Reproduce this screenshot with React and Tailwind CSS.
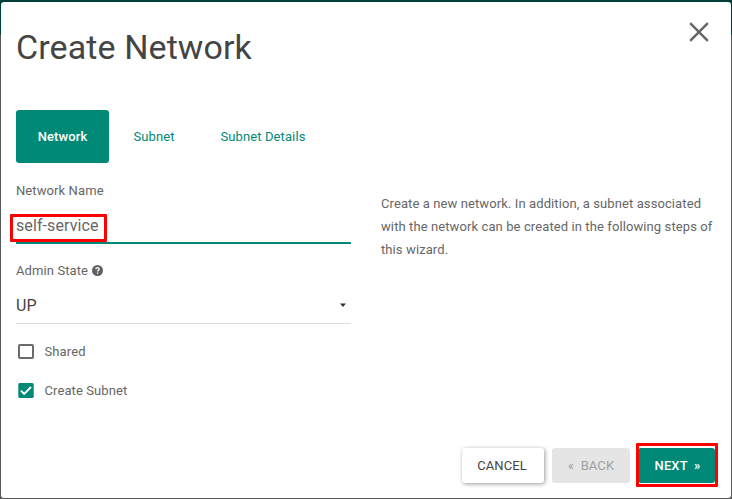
import { useState } from "react";

const tabs = [
  { label: "Network", width: "w-[93px]" },
  { label: "Subnet", width: "w-[90px]" },
  { label: "Subnet Details", width: "w-[128px]" },
];

function Checkbox({ label, checked, onChange }) {
  return (
    <label className="flex h-[23px] items-center gap-[10px] pl-[2px]">
      <input type="checkbox" className="sr-only" checked={checked} onChange={onChange} />
      {checked ? (
        <svg width="16" height="15" viewBox="0 0 16 15" className="shrink-0">
          <rect x="0.3" width="15.4" height="15" rx="1.5" fill="#008977" />
          <path d="M2.9 7.6 6.2 10.9 13 4" fill="none" stroke="#fff" strokeWidth="1.8" />
        </svg>
      ) : (
        <span className="h-[15px] w-[16px] shrink-0 rounded-[2px] border-2 border-[#6b6b6b]" />
      )}
      <span className="pl-[0.5px]">{label}</span>
    </label>
  );
}

export default function App() {
  const [shared, setShared] = useState(false);
  const [subnet, setSubnet] = useState(true);

  return (
    <div className="h-[499px] w-[732px] overflow-hidden bg-[linear-gradient(#003f38_35px,#5a5a5a_35px)] px-px pt-[2px] pb-px font-[Roboto,sans-serif] text-[13px] leading-[23px] tracking-[0.1px] text-[#666]">
      <div className="flex h-[496px] flex-col rounded-[3px] bg-white px-[15px]">
        <header className="flex h-[108px] items-start justify-between pt-[20px] pr-[7px]">
          <h1 className="mt-[6px] text-[34px] leading-[38px] font-normal tracking-[0.1px] text-[#444]">
            Create Network
          </h1>
          <button aria-label="Close" className="block">
            <svg width="20" height="20" viewBox="0 0 20 20" fill="none" stroke="#666" strokeWidth="2.5">
              <path d="M1.2 1.2 18.8 18.8M18.8 1.2 1.2 18.8" />
            </svg>
          </button>
        </header>

        <nav className="flex h-[53px]">
          {tabs.map((t, i) => (
            <button
              key={t.label}
              className={`${t.width} ${
                i === 0 ? "rounded-[3px] bg-[#008977] font-medium text-white" : "text-[#008977]"
              } text-center`}
            >
              {t.label}
            </button>
          ))}
        </nav>

        <div className="flex h-[282px] gap-[30px]">
          <div className="w-[335px] pt-[16px]">
            <div>Network Name</div>
            <div className="relative h-[42px] border-b-2 border-[#008977] pt-[12px] text-[16px] leading-[23px]">
              self-service
              <div className="absolute -left-[6px] top-[12px] h-[28px] w-[97px] rounded-[1px] border-3 border-[#fe0000]" />
            </div>

            <div className="mt-[15px] flex items-center gap-[4px]">
              Admin State
              <svg width="11" height="11" viewBox="0 0 11 11">
                <circle cx="5.5" cy="5.5" r="5.5" fill="#606060" />
                <path
                  d="M3.8 4.1c.1-1 .8-1.5 1.7-1.5 1 0 1.7.6 1.7 1.4 0 1.1-1.6 1.1-1.6 2.5M5.6 7.5v1.2"
                  fill="none"
                  stroke="#fff"
                  strokeWidth="1.4"
                />
              </svg>
            </div>
            <div className="flex h-[42px] items-center justify-between border-b border-[#ddd] pr-[5px] pt-[6px] text-[16px] text-[#444]">
              <span>UP</span>
              <svg width="6" height="4" viewBox="0 0 6 4" className="-mt-[2px]">
                <path d="M0 .5H6L3 4Z" fill="#333" />
              </svg>
            </div>
            <div className="mt-[16px] flex flex-col gap-[16px]">
              <Checkbox label="Shared" checked={shared} onChange={() => setShared(!shared)} />
              <Checkbox label="Create Subnet" checked={subnet} onChange={() => setSubnet(!subnet)} />
            </div>
          </div>
          <p className="w-[335px] pt-[29px]">
            Create a new network. In addition, a subnet associated with the network can be created in
            the following steps of this wizard.
          </p>
        </div>

        <footer className="flex justify-end gap-[8px] pt-[3px] pr-px">
          <button className="mr-[0.5px] h-[35px] w-[82px] rounded-[3px] bg-white pr-px text-[#444] shadow-[1px_1px_4px_rgba(0,0,0,0.4)]">
            CANCEL
          </button>
          <button className="h-[35px] w-[78px] rounded-[3px] bg-[#e5e5e5] whitespace-pre text-[#a0a0a0]">
            {"«  BACK"}
          </button>
          <button className="relative h-[35px] w-[77px] rounded-[3px] bg-[#008977] pl-[2px] font-medium whitespace-pre text-white">
            {"NEXT  »"}
            <span className="absolute -left-[2px] -top-[5px] h-[44px] w-[82px] rounded-[1px] border-3 border-[#fe0000]" />
          </button>
        </footer>
      </div>
    </div>
  );
}
